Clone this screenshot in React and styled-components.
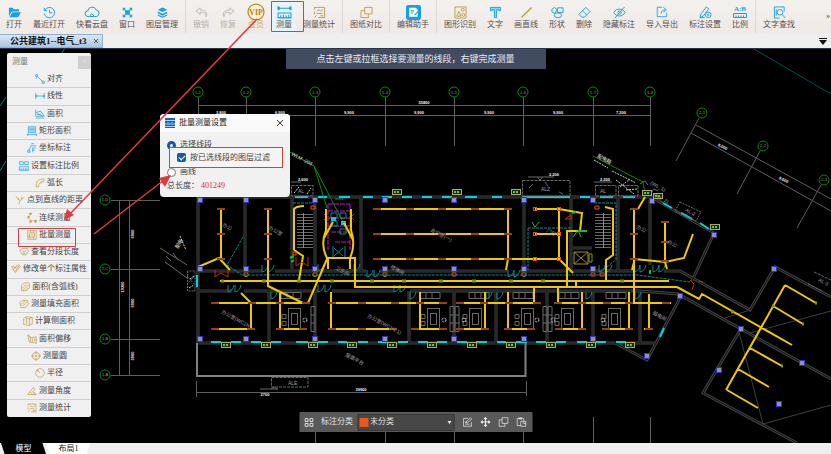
import React from "react";
import styled, { createGlobalStyle } from "styled-components";

const GlobalStyle = createGlobalStyle`
  * {
    box-sizing: border-box;
  }

  body {
    margin: 0;
    background: #000;
    font-family: "Liberation Serif", "Noto Sans CJK SC", serif;
    font-size: 8px;
    line-height: 10px;
    color: #444;
  }

  button,
  select,
  input {
    font: inherit;
    color: inherit;
    margin: 0;
  }
`;

const BLUE = "#16a0e6";
const GOLD = "#c39a45";
const GREY = "#b9b6b4";

const ICONS = {
  open: <path d="M1 2h4l1 1.500h6V6H4L1 11zM4.600 6.700H14L11 12H1.600z" fill="currentColor" stroke="none" />,
  history: <path d="M2 4.500A5.600 5.600 0 1 1 1.400 8M1.400 2v3h3M7 4v3.400h3" />,
  cloud: <path d="M4 11.500H3A2.700 2.700 0 0 1 2.700 6 4.400 4.400 0 0 1 11.200 5a3.300 3.300 0 0 1 .3 6.500H9.700L6.600 8.700 4.600 11.500H9" />,
  window: (
    <path
      d="M1 1h4L3.600 2.400 5 4h4l1.400-1.600L9 1h4v4l-1.400-1.400L10 5v4l1.600 1.400L13 9v4H9l1.400-1.400L9 10H5l-1.400 1.600L5 13H1V9l1.400 1.400L4 9V5L2.400 3.600 1 5z"
      fill="currentColor"
      stroke="none"
    />
  ),
  layers: (
    <g fill="currentColor" stroke="none">
      <path d="M7 .5 13 3.500 7 6.500 1 3.500z" />
      <path d="M1 5.600 7 8.600 13 5.600V8L7 11 1 8z" />
      <path d="M1 9.400 7 12.200 13 9.400V11L7 13.800 1 11z" />
    </g>
  ),
  undo: <path d="M5.500 2 1 5.500 5.500 9V6.800c4-.3 6 .7 6.500 4.700C14 7.500 11 4 5.500 4.200z" />,
  redo: <path d="M8.500 2 13 5.500 8.500 9V6.800c-4-.3-6 .7-6.500 4.700C0 7.500 3 4 8.500 4.200z" />,
  vip: (
    <g>
      <circle cx="7" cy="7" r="6.200" fill="#fbf3dc" />
      <text x="7" y="9" fontSize="6" fontWeight="bold" textAnchor="middle" fill="#b67d12" stroke="none">
        VIP
      </text>
    </g>
  ),
  measure: <path d="M1 1v4M13 1v4M1 3h12M2.500 1.800 1 3l1.500 1.200M11.500 1.800 13 3l-1.500 1.200M1 7.500h12v4.500H1zM3.500 12V9.500M6 12V9M8.500 12V9.500M11 12V9" />,
  stats: <path d="M1.500 4V1.500h11V12.500h-7M1.500 6v3M4 5.500 6 4l2 1.500L10.500 4M4 8h6M1.500 12.500 4 10M8 10.500h3" />,
  compare: <path d="M5 1.500h8v7H5zM5 5H1v7.500h8v-4" />,
  helper: (
    <g>
      <rect width="14" height="14" rx="2" fill="#159fe8" stroke="none" />
      <path d="M3 2.500h6l2 2v6.500H3z" fill="#fff" stroke="none" />
      <path d="M4.500 5.500h3M4.500 7.500h2M12 5.500 8 9.500" stroke="#159fe8" />
    </g>
  ),
  identify: (
    <g>
      <path d="M1 1h12v12H1zM3 11l2.300-5 2.200 5z" />
      <circle cx="9.500" cy="4" r="1.600" />
      <circle cx="10" cy="9.500" r="1.600" />
    </g>
  ),
  text: <path d="M1.500 1.500h11v3.500h-2V4H8.200v8.500H5.800V4H3.500v1h-2z" fill="#8fd2f5" />,
  line: <path d="M1.500 12.500 12.500 1.500" strokeWidth="1.500" />,
  shapes: (
    <g>
      <path d="M1 3.500 4 1.500l2.500 3L4 8 1 6.500zM7 2h6v5H7z" />
      <ellipse cx="7.500" cy="10" rx="4" ry="2.600" />
    </g>
  ),
  eraser: <path d="M8.500 1.500 13 6 7 12H4L1 9zM4.800 5.200 9.500 9.700" />,
  eyeOff: (
    <g>
      <path d="M1 7c2.500-5 9.500-5 12 0-2.500 5-9.500 5-12 0zM12.500 1 2 13" />
      <circle cx="7" cy="7" r="1.800" />
    </g>
  ),
  transfer: <path d="M7 1.500H1.500v11h11V8M6 9c0-3 1.500-4.500 5-4.500M8.500 1.500 12 4.500 8.500 7.200" />,
  penGear: (
    <g>
      <path d="M1 12.500 2.500 8 8 1l2.500 2L5 10.500zM1 12.500h5" />
      <circle cx="10" cy="9.500" r="3" />
      <circle cx="10" cy="9.500" r=".8" />
    </g>
  ),
  ratio: (
    <g>
      <text x="7" y="6" fontSize="7" fontWeight="bold" textAnchor="middle" fill="currentColor" stroke="none">
        A:B
      </text>
      <path d="M.5 8.500h13v4H.5zM3 12.500v-2M5.500 12.500v-2M8 12.500v-2M10.500 12.500v-2" />
    </g>
  ),
  find: (
    <g>
      <path d="M12 6V1H1.500v12H7M3.500 3.500v7" />
      <circle cx="7.500" cy="6.800" r="3" />
      <path d="m9.700 9 3.500 4" />
    </g>
  ),
  align: <path d="M1 1h2.500v2.500H1zM10 10h3v3h-3zM3.500 3.500l6.500 6.500M1 6l2-1" />,
  linear: <path d="M1 3v8M13 3v8M1 7h12M3 5.500 1 7l2 1.500M11 5.500 13 7l-2 1.500" />,
  area: <path d="M1 1v9h12L8 3 1 5M1 12.500h12M3 6l8 4M3 8h5" />,
  rectArea: <path d="M2 1h10v8H2zM3 3h8M3 5h8M3 7h8M1 12h12M1 10v4M13 10v4" />,
  coord: <path d="M1 13h3v-3H1zM3 10 6 3M6 1h4M6 4h7M8 7v6M8 7h4M8 10h3" />,
  scale: <path d="M1 1h5v4H1zM8 1h5v4H8zM.5 8h13v5H.5zM3 13v-3M6 13v-3M9 13v-3M11 13v-3" />,
  arc: <path d="M1.500 12.500C1 5 5 1 12.500 1.500v3C8 4.500 5 7 5 12.500zM8 8l3-3" />,
  distance: <path d="M1 2l6 6 6-5M7 8l-1.500 5M5 4l-1 3M9 3v3" />,
  chain: (
    <g>
      <path d="M5 1 2 6l3 5h7" strokeDasharray="3 1" />
      <path d="M4 0h2v2H4zM1 5h2v2H1zM4 11h2v2H4zM11 10h2v3h-2z" fill="currentColor" />
    </g>
  ),
  batch: <path d="M1 1h12v12H1zM3.500 4h7v6h-7zM1 8l4 5M5 1v3M9 1v3M5.500 8l1.500-2 2 3M9 13v-3" />,
  segment: <path d="M1 5 5 2h7l1 4-3 5H5zM4 5l3 2 3-2M5 9h4" />,
  edit: <path d="M1 4l5 8 7-9-3-2-4 5-2-3zM3 8l5-6M6 10l5-7" />,
  arcArea: <path d="M2 12V5c2-4 7-5 11-3v6l-4 4zM3 9l6-6M4 12l8-8M9 11l3-3" />,
  fill: <path d="M1 5l4-3h7l1 5-4 5H3zM3 8l5-5M5 10l6-6" />,
  side: <path d="M1 3l4-2 8 1v9l-4 2-8-1zM5 3v8M9 4v9M5 3l4 1 4-2" />,
  offset: <path d="M1 1l2 10 10 2V4L6 5zM5 6v5M8 6v5M11 6v5M3 3l3 3" />,
  circle: (
    <g>
      <circle cx="7" cy="7" r="5" />
      <path d="M7 0v4M7 10v4M0 7h4M10 7h4M5 5l4 4M9 5l-4 4" />
    </g>
  ),
  radius: (
    <g>
      <circle cx="7" cy="7" r="6" />
      <path d="M7 7 3 3M3 5V3h2" />
    </g>
  ),
  angle: <path d="M1 12 9 2l2 3-3 3 3 4zM4 9c2 0 3 1 3 3M9 8l4 4h-3" />,
  grid: <path d="M1 1h4.500v4.500H1zM8.500 1H13v4.500H8.500zM1 8.500h4.500V13H1zM8.500 8.500H13V13H8.500z" strokeWidth="1.500" />,
  modify: <path d="M8 2H1.500v11h11V7M4 10h6M4 8l7-7 2 2-6 5zM4 6l2 2" />,
  move: <path d="M7 1v12M1 7h12M5 3l2-2 2 2M5 11l2 2 2-2M3 5 1 7l2 2M11 5l2 2-2 2" strokeWidth="1.500" />,
  copy: <path d="M5 1h8v8H5zM5 4H1v9h8V9" />,
  paste: <path d="M6 12H1V2h9v3M4 1h3v2H4zM6 6h7v7H6zM10 6v3h3" />,
};

const IconSvg = styled.svg`
  flex: none;
  width: ${(p) => p.$size}px;
  height: ${(p) => p.$size}px;
  color: ${(p) => p.$color};
  fill: none;
  stroke: currentColor;
  overflow: visible;
`;

const Icon = ({ name, color = BLUE, size = 13 }) => (
  <IconSvg viewBox="0 0 14 14" $size={size} $color={color} aria-hidden="true">
    {ICONS[name]}
  </IconSvg>
);

const Screen = styled.div`
  position: relative;
  display: flex;
  flex-direction: column;
  min-height: 100vh;
  overflow: hidden;
`;

const Toolbar = styled.header`
  display: flex;
  align-items: flex-start;
  height: 34px;
  background: linear-gradient(#f3f1ee, #f0e9e6);
`;

const ToolGroup = styled.div`
  display: flex;
  gap: 11px;
  padding: 5px 7px 2px;
  border-right: 1px solid ${(p) => (p.$last ? "transparent" : "#dcd8d5")};

  &:first-child {
    padding-left: 6px;
  }
`;

const ToolButton = styled.button`
  display: flex;
  flex-direction: column;
  align-items: center;
  gap: 1px;
  height: 26px;
  padding: 0;
  border: 0;
  background: ${(p) => (p.$active ? "#e9f3fb" : "none")};
  box-shadow: ${(p) => (p.$active ? "0 0 0 4px #e9f3fb" : "none")};
  color: ${(p) => p.$color || "#55504e"};
  white-space: nowrap;
`;

const IconSlot = styled.span`
  display: flex;
  align-items: center;
  height: 14px;
`;

const MoreButton = styled.button`
  margin-left: auto;
  padding: 11px 1px 0;
  border: 0;
  background: none;
`;

const FileTabs = styled.nav`
  display: flex;
  justify-content: space-between;
  align-items: center;
  height: 14px;
  padding-right: 4px;
  background: #efefef;
`;

const FileTab = styled.div`
  display: flex;
  align-items: center;
  gap: 6px;
  height: 14px;
  padding: 0 3px 0 10px;
  border: 1px solid #8fb0d3;
  border-left: 0;
  background: linear-gradient(#dbe8f5, #a9c6e6);
  color: #111;
  font-size: 9px;
  font-weight: bold;
`;

const BareButton = styled.button`
  display: flex;
  align-items: center;
  justify-content: center;
  padding: 0;
  border: 0;
  background: none;
`;

const Workspace = styled.main`
  position: relative;
  flex: 1;
  min-height: 395px;
  background: #000;
  border-top: 1px solid #2d3448;
`;

const Drawing = styled.svg`
  position: absolute;
  inset: 0;
  width: 100%;
  height: 100%;
  fill: none;
`;

const Hint = styled.div`
  position: absolute;
  top: 0;
  left: 50%;
  width: 260px;
  padding: 5px 0;
  transform: translateX(-50%);
  background: #414c63;
  color: #e8ebf0;
  font-size: 9px;
  text-align: center;
  white-space: nowrap;
`;

const Palette = styled.aside`
  position: absolute;
  top: 4px;
  bottom: 26px;
  left: 7px;
  display: flex;
  flex-direction: column;
  width: 84px;
  border-radius: 2px;
  background: #f0f0f0;
`;

const PaletteHeader = styled.div`
  display: flex;
  align-items: center;
  justify-content: space-between;
  height: 18px;
  padding-left: 5px;
  color: #777;
`;

const PaletteClose = styled(BareButton)`
  width: 13px;
  height: 13px;
  background: #cfcfcf;
  color: #e8e8e8;
`;

const PaletteList = styled.div`
  flex: 1;
  display: grid;
  grid-auto-rows: 1fr;
`;

const PaletteItem = styled.button`
  display: flex;
  align-items: center;
  justify-content: center;
  gap: 2px;
  min-height: 0;
  padding: 0;
  border: 0;
  border-bottom: 1px solid #cfcfcf;
  background: none;
  white-space: nowrap;

  &:last-child {
    border-bottom: 0;
  }
`;

const Dialog = styled.section`
  position: absolute;
  top: 65px;
  left: 160px;
  width: 130px;
  padding-bottom: 6px;
  border-radius: 4px;
  background: #f1f1f1;
`;

const DialogHeader = styled.div`
  display: flex;
  align-items: center;
  gap: 4px;
  height: 18px;
  padding: 0 6px 0 5px;
  border-radius: 4px 4px 0 0;
  background: #fafafa;
  color: #222;

  button {
    margin-left: auto;
  }
`;

const DialogBadge = styled.svg`
  width: 10px;
  height: 10px;
`;

const Option = styled.label`
  display: flex;
  align-items: center;
  gap: 4px;
  height: 14px;
  padding-left: 7px;
`;

const FirstOption = styled(Option)`
  margin-top: 6px;
`;

const Radio = styled.input`
  appearance: none;
  width: 9px;
  height: 9px;
  border: 1px solid #777;
  border-radius: 50%;
  background: #fff;

  &:checked {
    border: 3px solid #1459b0;
  }
`;

const FilterBox = styled.label`
  position: relative;
  display: flex;
  align-items: center;
  gap: 4px;
  height: 21px;
  margin: -5px 7px -3px 9px;
  padding-left: 7px;
  border: 1px solid #e2393d;
  background: #f4f4f4;
`;

const Check = styled.input`
  appearance: none;
  width: 9px;
  height: 9px;
  border-radius: 2px;
  background: #1459b0;

  &:checked::after {
    content: "";
    display: block;
    width: 5px;
    height: 3px;
    margin: 2px;
    border: solid #fff;
    border-width: 0 0 1px 1px;
    transform: rotate(-45deg);
  }
`;

const Total = styled.p`
  margin: 2px 0 0 7px;

  output {
    margin-left: 2px;
    color: #e0262b;
  }
`;

const ClassBar = styled.div`
  position: absolute;
  bottom: 11px;
  left: 50%;
  display: flex;
  align-items: center;
  gap: 8px;
  width: 233px;
  height: 20px;
  padding: 0 5px;
  transform: translateX(-50%);
  background: #595959;
  color: #e2e2e2;
`;

const ClassField = styled.label`
  display: flex;
  align-items: center;
  gap: 4px;
  white-space: nowrap;
`;

const SelectWrap = styled.span`
  position: relative;
  display: block;

  &::before {
    content: "";
    position: absolute;
    top: 4px;
    left: 2px;
    width: 9px;
    height: 9px;
    background: #e8571c;
  }

  &::after {
    content: "";
    position: absolute;
    top: 7px;
    right: 3px;
    border: 2px solid transparent;
    border-top: 3px solid #eee;
  }
`;

const ClassSelect = styled.select`
  appearance: none;
  width: 97px;
  height: 17px;
  padding: 0 0 0 12px;
  border: 1px solid #383838;
  background: #474747;
`;

const LayoutTabs = styled.footer`
  display: flex;
  height: 11px;
  padding-left: 1px;
  background: #efefef;
  overflow: hidden;
`;

const LayoutTab = styled.button`
  width: 45px;
  height: 11px;
  padding: 0;
  border: 0;
  background: ${(p) => (p.$active ? "#000" : "#fff")};
  color: ${(p) => (p.$active ? "#fff" : "#111")};
  clip-path: polygon(
    ${(p) => (p.$active ? "0 0, 92% 0, 100% 100%, 8% 100%" : "0 0, 98% 0, 90% 100%, 8% 100%")}
  );
`;

const Marks = styled.svg`
  position: absolute;
  inset: 0;
  width: 100%;
  height: 100%;
  fill: none;
  stroke: #e2393d;
  pointer-events: none;
`;

const TOOL_GROUPS = [
  [
    ["打开", "open"],
    ["最近打开", "history"],
    ["快看云盘", "cloud", BLUE, 14],
    ["窗口", "window", BLUE, 11],
    ["图层管理", "layers", BLUE, 11],
  ],
  [
    ["撤销", "undo", GREY],
    ["恢复", "redo", GREY],
    ["会员", "vip", "#c08a20", 18],
    ["测量", "measure", BLUE, 15],
    ["测量统计", "stats", GOLD],
  ],
  [["图纸对比", "compare", GOLD]],
  [["编辑助手", "helper", BLUE, 15]],
  [
    ["图形识别", "identify", GOLD],
    ["文字", "text"],
    ["画直线", "line", GOLD],
    ["形状", "shapes"],
    ["删除", "eraser"],
    ["隐藏标注", "eyeOff"],
    ["导入导出", "transfer", BLUE, 12],
    ["标注设置", "penGear"],
    ["比例", "ratio", BLUE, 14],
  ],
  [["文字查找", "find"]],
];

const MEASURES = [
  ["对齐", "align", BLUE],
  ["线性", "linear", BLUE],
  ["面积", "area", BLUE],
  ["矩形面积", "rectArea", BLUE],
  ["坐标标注", "coord", BLUE],
  ["设置标注比例", "scale", BLUE],
  ["弧长", "arc", GOLD],
  ["点到直线的距离", "distance", GOLD],
  ["连续测量", "chain", GOLD],
  ["批量测量", "batch", GOLD],
  ["查看分段长度", "segment", GOLD],
  ["修改单个标注属性", "edit", GOLD],
  ["面积(含弧线)", "arcArea", GOLD],
  ["测量填充面积", "fill", GOLD],
  ["计算侧面积", "side", GOLD],
  ["面积偏移", "offset", GOLD],
  ["测量圆", "circle", GOLD],
  ["半径", "radius", GOLD],
  ["测量角度", "angle", GOLD],
  ["测量统计", "stats", GOLD],
];

const AXES_X = [198, 246, 315, 385, 454, 523, 593, 650];
const AXES_Y = [200, 269, 339, 375];
const AXES_WING = [
  [702, 113],
  [763, 146],
  [824, 180],
];

const COLUMNS = [200, 269, 339].flatMap((y) => [200, 246, 315, 385, 454, 524, 593].map((x) => [x, y]));
const WING_COLUMNS = [
  [652, 201], [714, 235], [774, 269], [680, 296], [741, 329], [719, 370], [802, 363], [779, 404], [647, 356],
];

const WALLS =
  "M198 197H651L714 233L692 281M198 197V343H655M198 271H262M275 271H366M380 271H508M520 271H634M664 271H680L750 310L775 267L831 297" +
  "M198 291H232M244 291H318M332 291H394M410 291H640L678 294L831 379M245 197V271M292 197V271M315 197V271M361 197V271M524 197V271M571 197V271M618 197V271M650 200V265" +
  "M269 291V343M315 291V343M409 291V343M454 291V343M496 291V343M547 291V343M593 291V343M640 291V343" +
  "M680 298L647 360L615 343M739 332L703 393L797 443M573 248H592";

const TOP_WINDOWS = [
  [295, 308], [318, 327], [339, 350], [363, 373], [382, 392], [402, 412], [422, 432], [442, 452],
  [465, 477], [492, 502], [522, 570], [580, 590], [600, 613], [623, 635],
];
const BOTTOM_WINDOWS = [
  [211, 221], [231, 241], [251, 261], [271, 281], [296, 308], [318, 328], [338, 347], [358, 368],
  [378, 388], [398, 408], [418, 428], [437, 447], [457, 467], [476, 487], [497, 506], [516, 527],
  [536, 546], [556, 566], [577, 587], [596, 606], [616, 626],
];

const PIPES =
  "M221 209V259M198 267L219 258L230 270M268 209V286L303 303M373 209H508M373 234H508M373 259H559M508 209V259L506 270" +
  "M535 209H559V259L573 273M535 234H559M559 209L582 213L580 231H567V286M294 250V209Q297 206 304 206M294 250L303 256L299 280" +
  "M326 209V230Q320 245 327 258H355V287H677M351 209V230Q356 245 350 258M327 259L308 303M333 222L324 238M344 223L353 240M328 258V269M350 258V269" +
  "M220 281H669M605 207L613 209V255L606 260V281M634 209V302M645 197L638 209M665 222V262M634 259L665 262L684 258L693 234M634 262L632 270M665 262L667 269" +
  "M576 281V287M677 287L699 299L702 294L792 345" +
  "M211 303H306M330 303H447M457 303H538M556 303H671M211 329H252M278 329H306M330 329H397M412 329H447M457 329H486M505 329H532M556 329H583M603 329H633M644 329H653" +
  "M241 293L251 303V329M280 292V329M331 292V329M420 292V329M485 292V329M508 292V329M534 287V303M558 287V303M582 292V329M629 292V329M649 294V329" +
  "M785 285L726 390M785 285L816 303M773 306L803 324M750 348L782 366M738 369L769 387M727 390L758 408";

const LAMPS = [
  ...[209, 234, 259].flatMap((y) => [221, 268, 377, 410, 442, 475, 508, 634].map((x) => [x, y])),
  ...[215, 252, 280, 306, 332, 362, 395, 420, 443, 460, 484, 509, 537, 558, 582, 607, 629, 666].map((x) => [x, 303]),
  ...[215, 251, 280, 303, 332, 362, 393, 415, 443, 460, 485, 508, 531, 559, 582, 606, 629, 649].map((x) => [x, 329]),
  [665, 222], [665, 242], [665, 261],
];

const ROOM_TAGS = [
  ...[226, 266, 313, 352, 392, 432, 472, 511, 551, 591, 630].map((x) => [x, 346]),
  [397, 193], [457, 193], [516, 193], [647, 194], [658, 197], [715, 228],
];

const DESKS = [288, 427, 469, 521, 561, 608];
const SOFAS = [281, 420, 469, 513, 559, 606];
const SIDE_SEATS = [311, 450, 455, 543, 548];
const DOORS = [
  [262, 265], [268, 265], [318, 264], [354, 264], [367, 270], [374, 270], [508, 270], [514, 270], [599, 265],
  [606, 265], [634, 265], [640, 265], [653, 265], [659, 265], [228, 285], [235, 285], [318, 285], [325, 285],
  [394, 285], [400, 285], [271, 292], [410, 292], [486, 292], [497, 292], [586, 292], [635, 292],
];

const ROOM_NAMES = [
  [222, 226, "办公"], [268, 229, "办公室"], [430, 231, "会议室(一)"], [221, 313, "办公室(WC1N)"],
  [367, 317, "办公室(WC1N-1)"], [345, 356, "屋面平台"], [546, 232, "门厅"], [636, 228, "办公"],
  [667, 243, "办公"], [652, 314, "弱电间"], [335, 269, "卫生间"], [390, 268, "楼梯间"],
];

const DIMS_TOP = [[221, "3,800"], [280, "6,900"], [349, "9,900"], [419, "9,900"], [489, "9,900"], [558, "9,900"], [621, "7,200"]];

const dashes = (list, y) => list.map(([a, b]) => `M${a} ${y}H${b}`).join("");

const Plan = () => (
  <g transform="translate(0 -49)" fontFamily="Liberation Sans, Noto Sans CJK SC, sans-serif">
    <path d="M0 106L6 97M0 171L6 161M62 53L65 48" stroke="#087b84" />
    <path d="M752 48L831 94" stroke="#054f55" />

    <g stroke="#5e5e5e">
      <path d={AXES_X.map((x) => `M${x}.5 97V146`).join("")} />
      <path d="M198 105.500H651M198 115.500H651" />
      <path d={AXES_Y.map((y) => `M111 ${y}.5H160`).join("")} />
      <path d="M119.500 200V375M129.500 200V375" />
      <path d="M699 118L676 161M760 151L737 194M821 185L797 228M696 125L831 199M691 133L831 211" />
      <path d="M196.500 381V397M196 392.500H526.500M526.500 381V396M593.500 417V443M650.500 417V443M315.500 432V443M454.500 432V443M385.500 432V443M523.500 432V443" />
    </g>
    <g stroke="#078a10">
      {AXES_X.map((x) => <circle key={x} cx={x} cy="92" r="5" />)}
      {AXES_Y.map((y) => <circle key={y} cx="105" cy={y} r="5" />)}
      {AXES_WING.map(([x, y]) => <circle key={x} cx={x} cy={y} r="5" />)}
    </g>
    <g fill="#9a9a9a" fontSize="4" textAnchor="middle">
      {AXES_X.map((x, i) => <text key={x} x={x} y="94">1-{i + 1}</text>)}
      {AXES_Y.map((y, i) => <text key={y} x="105" y={y + 1}>1-{"DCBA"[i]}</text>)}
      {AXES_WING.map(([x, y], i) => <text key={x} x={x} y={y + 1}>2-{i + 1}</text>)}
    </g>
    <g fill="#f4f4f4" fontSize="4" fontWeight="bold" textAnchor="middle">
      {DIMS_TOP.map(([x, n]) => <text key={x} x={x} y="114">{n}</text>)}
      <text x="424" y="104">55800</text>
      <text x="361" y="391">39900</text>
      <text x="265" y="396">2700</text>
      <text x="554" y="176">2,200</text>
      <text x="605" y="181">2,200</text>
      <text x="303" y="181">2,600</text>
      <text transform="translate(722 148) rotate(28)">8,000</text>
      <text transform="translate(783 181) rotate(28)">9,600</text>
      <text transform="translate(134 234) rotate(-90)">6900</text>
      <text transform="translate(124 287) rotate(-90)">19200</text>
      <text transform="translate(134 303) rotate(-90)">6900</text>
      <text transform="translate(134 356) rotate(-90)">3900</text>
    </g>

    <path d={WALLS} stroke="#424242" strokeWidth="3" />
    <path d={WALLS} stroke="#101010" />
    <path d="M739 332L763 424L831 405M750 333L831 311M725 318L750 310" stroke="#3f3f3f" />
    <path d="M197 343V376H525.500V343" stroke="#808080" strokeWidth="2" />
    <path
      d={`${dashes(TOP_WINDOWS, 197)}${dashes(BOTTOM_WINDOWS, 342)}M197 275V287M663 203L672 208M681 213L692 219M700 223L709 229M664 328L660 337`}
      stroke="#00d2e0"
      strokeWidth="2"
    />

    <g stroke="#6a6a6a">
      <path d={Array.from({ length: 12 }, (_, i) => `M297 ${214.5 + i * 3}H313M595 ${214.5 + i * 3}H611`).join("")} />
      <path d="M303.500 213V248M603.500 213V248" stroke="#8a8a8a" />
      {DESKS.map((x) => (
        <g key={x}>
          <rect x={x + 0.5} y="308.500" width="12" height="21" />
          <rect x={x + 3.5} y="313.500" width="6" height="11" />
          <path d={`M${x - 6} 314.500h4v4h-4zM${x - 6} 321.500h4v4h-4z`} />
        </g>
      ))}
      {SOFAS.map((x) => <path key={x} d={`M${x} 292.500h20v6h-20zM${x + 6} 293v5M${x + 12} 293v5`} />)}
      {SIDE_SEATS.map((x) => <path key={x} d={`M${x} 306.500h4v25h-4zM${x} 315h4M${x} 323h4`} />)}
      <path d="M522.500 180.500H570V196H522.500zM595.500 185.500H616V196H595.500zM618.500 185.500H638V196H618.500zM291.500 185.500H313V196H291.500zM271.500 377.500H308V387H271.500z" strokeDasharray="3 1" />
      <path d="M529 188l4-4M548 186l-3-4M559 192l4 2M528 177H554M537 177l3 3 3-3M594 182H612M301 182H291M260 389H278M271 389l3-2 3 2M160 248L187 265M165 262L187 278M173 253l5 7M166 256l5 5" />
      <path d="M187.500 271V291H195V271zM187 276L195 285M187 284L195 276M680 202L701 212L696 221L675 211z" strokeDasharray="2 1" />
      <path d="M640 184l5-3 3 4M650 194l4-5 4 2" />
      <path d="M814 272L831 280M808 284L822 291" strokeDasharray="3 1" />
    </g>
    <g stroke="#cfcfcf" strokeDasharray="2 1">
      <path d="M594 160L608 168M612 171L636 183M616 180L634 194M620 187L630 179M626 190L637 189M294 193l5-6M307 194l4-6M189 288l5-3M190 279l4-3M180 236l6 14" />
      {[305, 444, 464, 537, 553, 603].map((x) => <circle key={x} cx={x} cy="320" r="2" />)}
    </g>

    <path d="M290 152L314 166L327 208M314 166L343 222M593 156L643 182L645 193" stroke="#0b8d16" />

    <g stroke="#c018c0" strokeDasharray="5 1">
      <path d="M328 204H350M328 204V250M350 204V250M328 211H350M328 218H350M328 226H350M331 232H347M335 242H350" />
      <path d="M324 214l3 3-3 3M354 214l-3 3 3 3" />
    </g>
    <g stroke="#0b8994">
      {DOORS.map(([x, y]) => <path key={`${x}-${y}`} d={`M${x} ${y}v7q5 -1 6 -7`} />)}
      <path d="M331 213h6v5h-6zM340 213h6v5h-6zM331 221h6v5h-6zM340 229h6v5h-6zM333 246v12M345 246v12M334 248l9 8M343 248l-9 8M335 199h8" />
      <path d="M243 237L227 265L242 275H637L690 282M293 203H314M594 203H616V260L600 272M528 228H571M528 228V270" strokeDasharray="3 1" />
    </g>
    <path d="M331 217h5v4h-5zM341 221h5v4h-5z" fill="#15c3d2" />

    <path d={PIPES} stroke="#f0c800" strokeWidth="2" />
    <path d="M574 252H588V264H574zM574 252L588 264M588 252L574 264M589 254h3v8h-3z" stroke="#9c9111" />
    <path d={LAMPS.map(([x, y]) => `M${x - 4} ${y}h8`).join("")} stroke="#9a430c" strokeWidth="2" />
    <g stroke="#ef4a16">
      {[[535, 209], [559, 209], [535, 234], [559, 234], [535, 259], [559, 259]].map(([x, y]) => (
        <rect key={`${x}-${y}`} x={x - 1.5} y={y - 1.5} width="3" height="3" />
      ))}
      <path d="M215 270v7l6-4 7 4v-7M296 257v9l6-4 6 4v-9M565 219l6-4v4zM690 280l4 4-2 6M699 281l4 1" stroke="#c62a12" />
      {[246, 315, 385, 454, 524, 593, 602].map((x) => <path key={x} d={`M${x - 2} 273h4v3h-4z`} />)}
      <path d="M311 206h4v3h-4zM595 206h4v3h-4zM293 252h3v3h-3z" />
    </g>
    <g stroke="#14bf2f">
      <path d="M246 276v1M315 276v1M385 276v1M524 276v1M650 270v4M578 231h9M572 213l4-1M290 258l4-2M291 262l3-2" strokeWidth="2" />
      <path d="M532 222l3 5 4-5M573 237l5-7 3 7" />
    </g>
    <path
      d="M221 281h3M262 281h4M297 281h4M330 281h4M370 281h4M402 281h4M439 281h4M472 281h4M509 281h4M541 281h4M620 281h4M731 312h3M772 306h3M815 303h2M802 324h2M781 366h2"
      stroke="#7d9c10"
      strokeWidth="3"
    />

    <g fill="#9192a4" stroke="#3434c4">
      {[...COLUMNS, ...WING_COLUMNS].map(([x, y]) => (
        <rect key={`${x}-${y}`} x={x - 2.5} y={y - 2.5} width="5" height="5" />
      ))}
    </g>
    {ROOM_TAGS.map(([x, y]) => (
      <g key={`${x}-${y}`}>
        <rect x={x - 4.5} y={y - 3.5} width="9" height="5" fill="#0a2e0a" stroke="#b9a55c" />
        <path d={`M${x - 3} ${y - 1}h6`} stroke="#5fc943" strokeWidth="2" strokeDasharray="2 1" />
      </g>
    ))}
    <g fill="#a0a0a0" fontSize="5">
      {ROOM_NAMES.map(([x, y, name]) => (
        <text key={`${x}-${y}`} transform={`translate(${x} ${y}) rotate(28)`}>{name}</text>
      ))}
      <text transform="translate(597 157) rotate(28)" fill="#eee">配电箱</text>
      <text transform="translate(291 155) rotate(28)" fill="#ddd">WLM -205</text>
      <text transform="translate(650 184) rotate(28)">(WL_1)</text>
      <text transform="translate(653 196) rotate(28)">(WL_2)</text>
      <text transform="translate(685 211) rotate(28)">AL-2</text>
      <text transform="translate(818 281) rotate(28)">AL-3</text>
      <text transform="translate(178 249) rotate(-60)" fill="#eee">配电</text>
      <text x="541" y="191">ALZ</text>
      <text x="600" y="193">AL</text>
      <text x="298" y="193">AL</text>
      <text x="288" y="385">ALE</text>
    </g>
  </g>
);

const ToolItem = ({ item: [label, icon, color, size] }) => {
  const textColor = icon === "vip" ? "#d1a96c" : color === GREY ? "#b5b0ad" : undefined;
  return (
    <ToolButton type="button" $active={icon === "measure"} $color={textColor}>
      <IconSlot>
        <Icon name={icon} color={color} size={size} />
      </IconSlot>
      <span>{label}</span>
    </ToolButton>
  );
};

const SettingsDialog = () => (
  <Dialog role="dialog" aria-labelledby="batch-title">
    <DialogHeader>
      <DialogBadge viewBox="0 0 10 10" aria-hidden="true">
        <path d="M0 0h10v10H0z" fill="#1763bd" />
        <path d="M0 2.500h10M1 5v2M3 4v3M5 5v2M7 4v3M9 5v2M0 8.500h10" stroke="#a9d2f5" fill="none" />
      </DialogBadge>
      <span id="batch-title">批量测量设置</span>
      <BareButton type="button" aria-label="关闭">
        <svg width="8" height="8" viewBox="0 0 8 8" stroke="#333">
          <path d="M1 1l6 6M7 1L1 7" />
        </svg>
      </BareButton>
    </DialogHeader>
    <FirstOption>
      <Radio type="radio" name="mode" defaultChecked />
      选择线段
    </FirstOption>
    <FilterBox>
      <Check type="checkbox" defaultChecked />
      按已选线段的图层过滤
    </FilterBox>
    <Option>
      <Radio type="radio" name="mode" />
      画线
    </Option>
    <Total>
      总长度：<output>401249</output>
    </Total>
  </Dialog>
);

const App = () => {
  return (
    <Screen>
      <GlobalStyle />
      <Toolbar>
        {TOOL_GROUPS.map((group, i) => (
          <ToolGroup key={i} $last={i === TOOL_GROUPS.length - 1}>
            {group.map((item) => (
              <ToolItem key={item[0]} item={item} />
            ))}
          </ToolGroup>
        ))}
        <MoreButton type="button" aria-label="更多">»</MoreButton>
      </Toolbar>

      <FileTabs>
        <FileTab>
          <span>公共建筑1--电气_t3</span>
          <BareButton type="button" aria-label="关闭">
            <svg width="6" height="6" viewBox="0 0 6 6" stroke="#555">
              <path d="M1 1l4 4M5 1L1 5" />
            </svg>
          </BareButton>
        </FileTab>
        <BareButton type="button" aria-label="文件列表">
          <svg width="8" height="7" viewBox="0 0 8 7">
            <path d="M0 0h8v1H0zM0 2h8L4 7z" fill="#111" />
          </svg>
        </BareButton>
      </FileTabs>

      <Workspace>
        <Drawing aria-label="电气平面图">
          <Plan />
        </Drawing>
        <Hint>点击左键或拉框选择要测量的线段，右键完成测量</Hint>

        <Palette>
          <PaletteHeader>
            <span>测量</span>
            <PaletteClose type="button" aria-label="关闭">×</PaletteClose>
          </PaletteHeader>
          <PaletteList>
            {MEASURES.map(([label, icon, color]) => (
              <PaletteItem key={label} type="button">
                <Icon name={icon} color={color} size={10} />
                <span>{label}</span>
              </PaletteItem>
            ))}
          </PaletteList>
        </Palette>

        <SettingsDialog />

        <ClassBar>
          <Icon name="grid" color="#e2e2e2" size={9} />
          <ClassField>
            标注分类
            <SelectWrap>
              <ClassSelect defaultValue="none">
                <option value="none">未分类</option>
              </ClassSelect>
            </SelectWrap>
          </ClassField>
          {[["modify", "编辑"], ["move", "移动"], ["copy", "复制"], ["paste", "粘贴"]].map(([name, label]) => (
            <BareButton key={name} type="button" aria-label={label}>
              <Icon name={name} color="#ededed" size={10} />
            </BareButton>
          ))}
        </ClassBar>
      </Workspace>

      <LayoutTabs>
        <LayoutTab type="button" $active>模型</LayoutTab>
        <LayoutTab type="button">布局1</LayoutTab>
      </LayoutTabs>

      <Marks aria-hidden="true">
        <path d="M271.500 1.500H303.500V31.500H271.500zM18.500 228.500H75.500V246.500H18.500z" />
        <path d="M257 19L69 215M94 234L164 180" strokeWidth="1.500" />
        <path d="M64 220L67 209L74 215zM171 175L159 178L165 187z" fill="#e2393d" stroke="none" />
      </Marks>
    </Screen>
  );
};

export default App;
